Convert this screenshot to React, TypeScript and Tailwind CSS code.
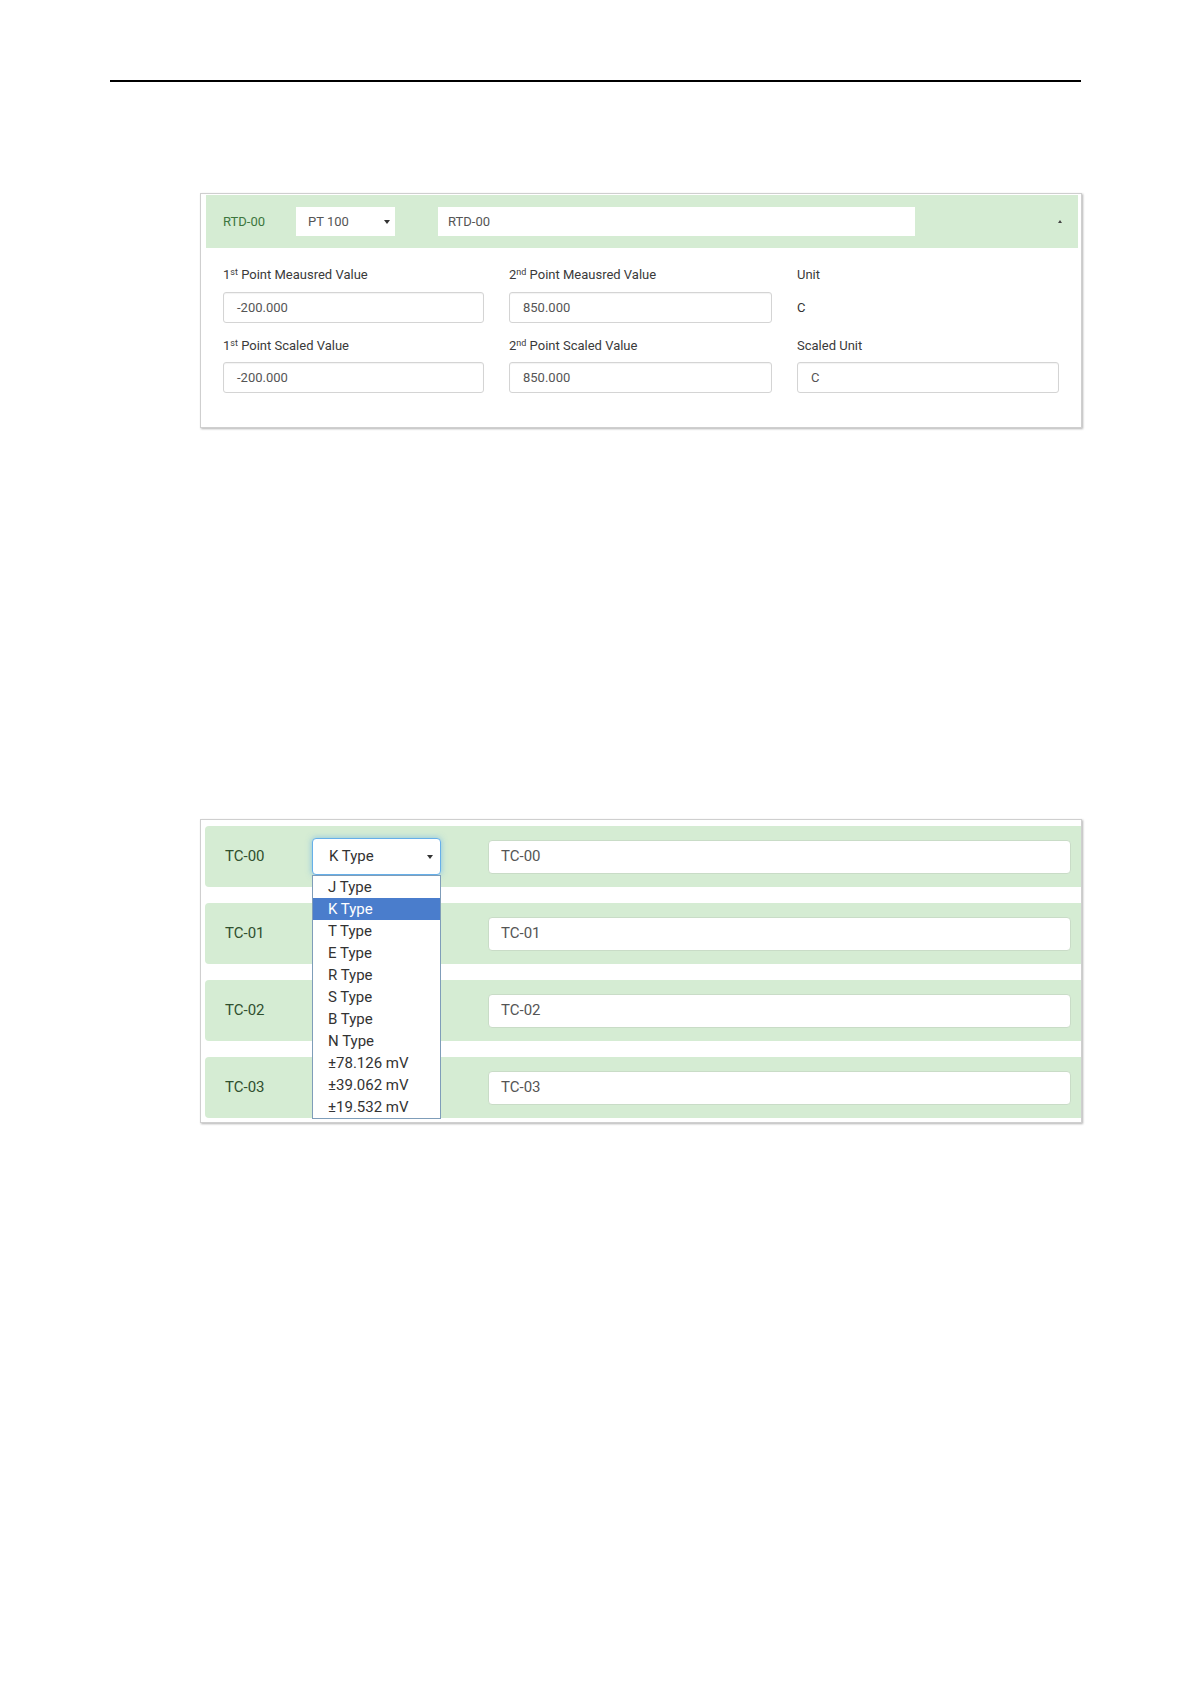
import React from "react";

const tcTypes = [
  "J Type",
  "K Type",
  "T Type",
  "E Type",
  "R Type",
  "S Type",
  "B Type",
  "N Type",
  "±78.126 mV",
  "±39.062 mV",
  "±19.532 mV",
];

const Arrow = () => (
  <svg width="6" height="4" viewBox="0 0 6 4" className="shrink-0">
    <polygon points="0,0 6,0 3,4" fill="#333" />
  </svg>
);

const Label: React.FC<{ n?: string; sup?: string; text: string }> = ({
  n,
  sup,
  text,
}) => (
  <div className="h-[18px] leading-[18px] text-[13px] text-[#3a3a3a]">
    {n}
    {sup && <sup className="text-[9px]">{sup}</sup>}
    {sup ? " " : ""}
    {text}
  </div>
);

const Field: React.FC<{ value: string }> = ({ value }) => (
  <div className="h-[31px] border border-[#d4d4d4] rounded-[3px] bg-white flex items-center pl-[13px] text-[13px] text-[#555] shadow-[inset_0_1px_1px_rgba(0,0,0,0.05)]">
    {value}
  </div>
);

const RtdPanel = () => (
  <div className="ml-[200px] mt-[111px] w-[882px] border border-[#cfcfcf] shadow-[1px_1px_2px_rgba(0,0,0,0.3)] bg-white">
    <div className="mt-[1px] ml-[5px] mr-[3px] h-[53px] bg-[#d5ecd3] flex items-center pl-[17px] pr-[16px] text-[13px]">
      <div className="w-[73px] text-[#3c763d]">RTD-00</div>
      <div className="w-[99px] h-[29px] bg-white flex items-center justify-between pl-[12px] pr-[5px] text-[#555]">
        <span>PT 100</span>
        <Arrow />
      </div>
      <div className="ml-[43px] w-[477px] h-[29px] bg-white flex items-center pl-[10px] text-[#555]">
        RTD-00
      </div>
      <div className="flex-1" />
      <svg width="4" height="3" viewBox="0 0 4 3">
        <polygon points="2,0 4,3 0,3" fill="#444" />
      </svg>
    </div>
    <div className="pl-[22px] pt-[18px] pb-[34px] grid grid-cols-[261px_263px_262px] gap-x-[25px]">
      <div>
        <Label n="1" sup="st" text="Point Meausred Value" />
        <div className="mt-[8px]">
          <Field value="-200.000" />
        </div>
        <div className="mt-[14px]">
          <Label n="1" sup="st" text="Point Scaled Value" />
        </div>
        <div className="mt-[7px]">
          <Field value="-200.000" />
        </div>
      </div>
      <div>
        <Label n="2" sup="nd" text="Point Meausred Value" />
        <div className="mt-[8px]">
          <Field value="850.000" />
        </div>
        <div className="mt-[14px]">
          <Label n="2" sup="nd" text="Point Scaled Value" />
        </div>
        <div className="mt-[7px]">
          <Field value="850.000" />
        </div>
      </div>
      <div>
        <Label text="Unit" />
        <div className="mt-[8px] h-[31px] flex items-center text-[13px] text-[#333]">
          C
        </div>
        <div className="mt-[14px]">
          <Label text="Scaled Unit" />
        </div>
        <div className="mt-[7px]">
          <Field value="C" />
        </div>
      </div>
    </div>
  </div>
);

const TcRow: React.FC<{ name: string; open?: boolean }> = ({ name, open }) => (
  <div className="h-[61px] bg-[#d5ecd3] rounded-l-[4px] flex items-center text-[15px]">
    <div className="w-[107px] pl-[20px] text-[#2f4f2e]">{name}</div>
    {open ? (
      <div className="relative">
        <div className="w-[129px] h-[37px] bg-white rounded-[4px] border border-[#66afe9] shadow-[0_0_6px_rgba(102,175,233,0.7)] flex items-center justify-between pl-[16px] pr-[7px] text-[#333]">
          <span>K Type</span>
          <Arrow />
        </div>
        <div className="absolute left-0 top-full z-10 w-[129px] bg-white border border-[#7f9db9]">
          {tcTypes.map((t) => (
            <div
              key={t}
              className={
                t === "K Type"
                  ? "h-[22px] leading-[22px] pl-[15px] bg-[#4a7dcc] text-white"
                  : "h-[22px] leading-[22px] pl-[15px] text-[#333]"
              }
            >
              {t}
            </div>
          ))}
        </div>
      </div>
    ) : (
      // covered by the open list above
      <div className="w-[129px] h-[37px]" />
    )}
    <div className="ml-[47px] mr-[10px] flex-1 h-[34px] bg-white rounded-[4px] border border-[#c9dcc7] flex items-center pl-[12px] text-[#555]">
      {name}
    </div>
  </div>
);

const TcPanel = () => (
  <div className="ml-[200px] mt-[391px] w-[882px] border border-[#cfcfcf] shadow-[1px_1px_2px_rgba(0,0,0,0.3)] bg-white pt-[6px] pl-[4px] pb-[4px] flex flex-col gap-[16px]">
    <TcRow name="TC-00" open />
    <TcRow name="TC-01" />
    <TcRow name="TC-02" />
    <TcRow name="TC-03" />
  </div>
);

export default function App() {
  return (
    <div
      className="w-[1191px] min-h-[1684px] bg-white"
      style={{ fontFamily: "Roboto, 'Liberation Sans', sans-serif" }}
    >
      <div className="pt-[80px] mx-[110px]">
        <div className="h-[2px] bg-black" />
      </div>
      <RtdPanel />
      <TcPanel />
    </div>
  );
}
